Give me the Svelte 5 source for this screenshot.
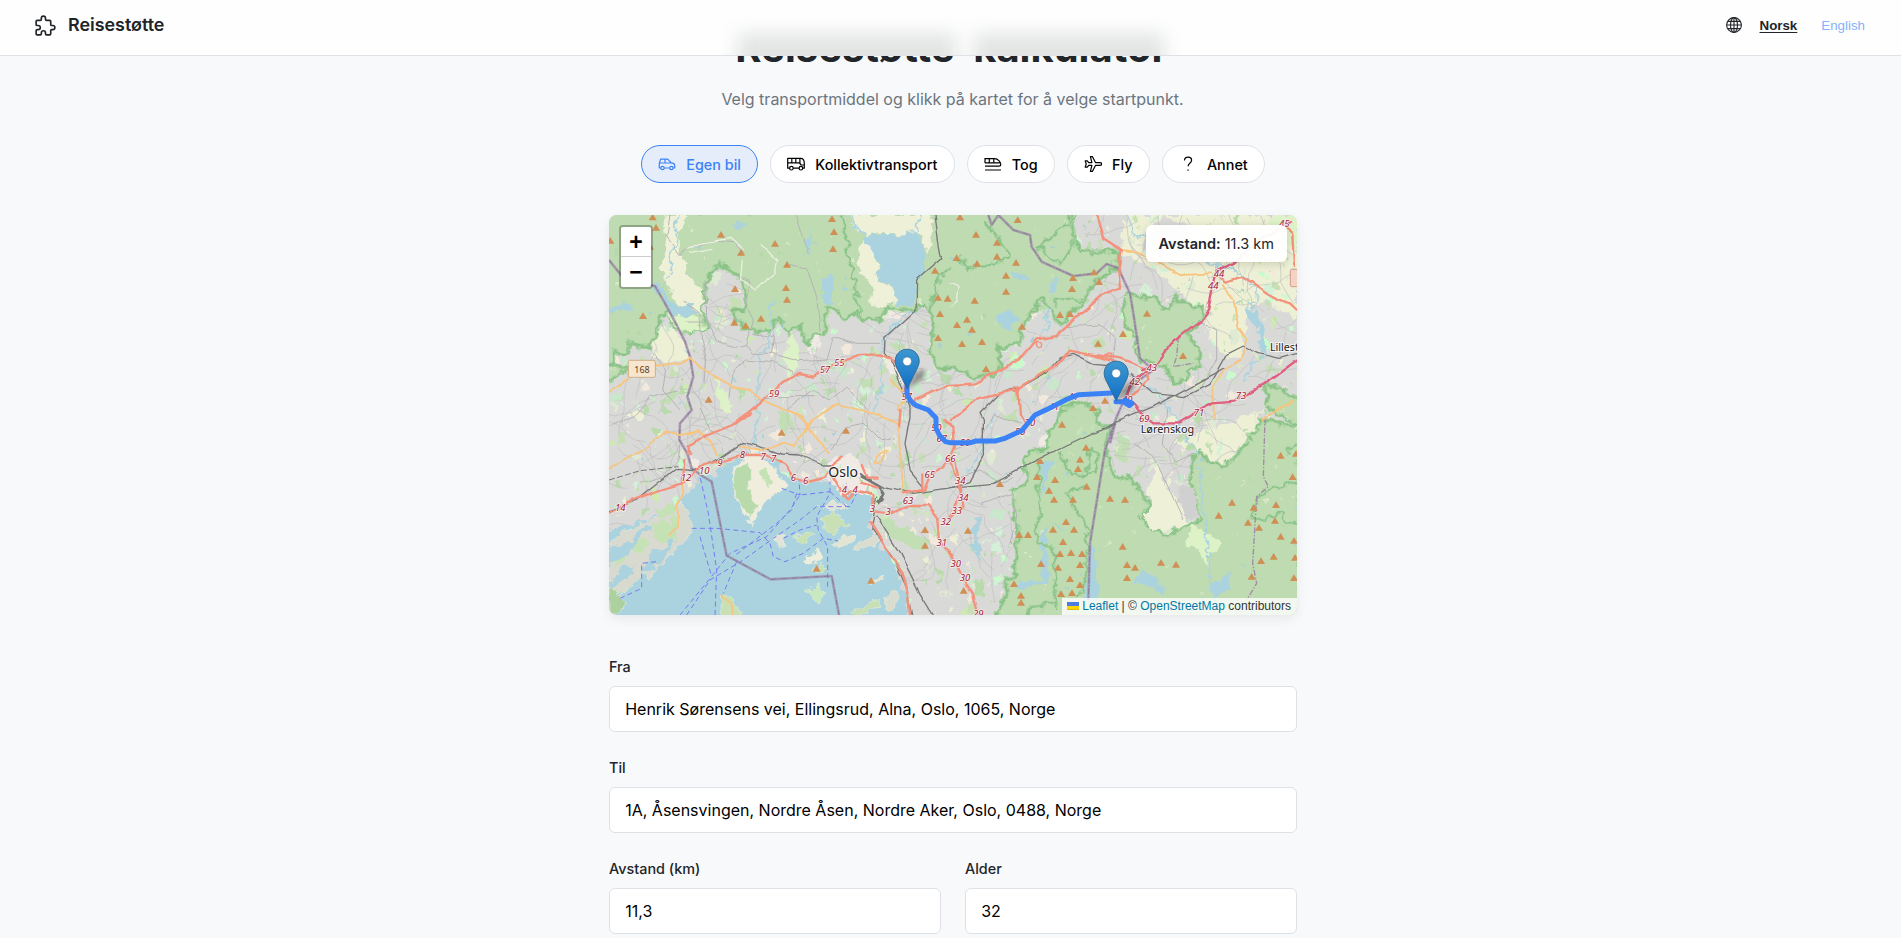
<script>
  const modes = [
    { id: 'car', label: 'Egen bil', active: true },
    { id: 'bus', label: 'Kollektivtransport' },
    { id: 'train', label: 'Tog' },
    { id: 'plane', label: 'Fly' },
    { id: 'other', label: 'Annet' }
  ];

  // Small deterministic generator for parks, blocks and residential streets.
  let seed = 4711;
  const rnd = () => ((seed = (seed * 16807) % 2147483647) / 2147483647);
  const f = (n) => n.toFixed(0);

  function blob(x, y, r) {
    let d = '';
    for (let i = 0; i < 8; i++) {
      const a = (i / 8) * Math.PI * 2;
      const q = r * (0.45 + rnd() * 0.8);
      d += (i ? 'L' : 'M') + f(x + Math.cos(a) * q) + ' ' + f(y + Math.sin(a) * q * 1.25);
    }
    return d + 'Z';
  }
  function street(x, y) {
    let a = rnd() * 6.28;
    let d = `M${f(x)} ${f(y)}`;
    for (let i = 0; i < 6; i++) {
      a += (rnd() - 0.5) * 1.1;
      x += Math.cos(a) * 26;
      y += Math.sin(a) * 26;
      d += `L${f(x)} ${f(y)}`;
    }
    return d;
  }
  const parkColors = ['#cdebb0', '#c9e8cb', '#c8facc', '#b9dbab', '#f2e9dc', '#eef0d5', '#d5f0d8', '#dfe9d3', '#c6dfb5'];
  const parks = Array.from({ length: 1300 }, () => {
    const x = 27 + rnd() * 2064, y = 15 + rnd() * 1200;
    return { d: blob(x, y, 3 + rnd() * rnd() * 20), c: parkColors[Math.floor(rnd() * parkColors.length)] };
  });
  const streets = Array.from({ length: 430 }, () => street(27 + rnd() * 2064, 15 + rnd() * 1200));
  const clearings = Array.from({ length: 420 }, () => {
    const x = 27 + rnd() * 2064, y = 15 + rnd() * 1200;
    return { d: blob(x, y, 2 + rnd() * 5), c: ['#cbe3bd', '#b5d8a8', '#c9e3bb', '#dbe8c9', '#a7d0d8'][Math.floor(rnd() * 5)] };
  });

  const forests = [
    'M0 0V510L27 510 60 490 80 470 35 465 40 430 82 432 90 390 130 415 155 400 175 360 180 318 205 305 225 350 260 365 322 355 305 290 318 215 340 185 355 157 380 182 410 195 435 235 446 285 432 300 400 300 405 340 430 345 440 360 510 365 530 320 565 368 605 345 608 385 622 405 640 380 670 370 676 295 700 297 740 328 765 310 790 328 845 325 860 297 945 298 975 285 990 300 1000 340 988 430 1022 480 1060 468 1080 482 1130 502 1185 490 1200 460 1198 408 1255 405 1270 340 1300 300 1325 268 1350 300 1365 325 1387 352 1405 310 1425 300 1450 272 1472 240 1488 215 1515 196 1550 168 1562 122 1440 126 1420 60 1400 0Z',
    'M1580 250 1670 265 1680 290 1705 300 1728 260 1750 280 1812 292 1812 325 1775 355 1760 370 1802 422 1795 470 1762 480 1755 510 1720 516 1700 480 1660 460 1620 450 1600 370 1575 345 1570 290Z',
    'M1350 660 1380 620 1400 590 1440 575 1490 595 1492 640 1525 650 1518 720 1525 755 1545 800 1590 805 1650 882 1625 922 1660 960 1700 975 1765 945 1800 930 1775 822 1775 750 1795 720 1830 762 1888 762 1930 705 1970 660 1980 628 2070 645 2100 650V1230H1190L1200 1180 1225 1145 1210 1110 1245 1100 1245 1040 1255 980 1240 850 1285 810 1270 750 1290 725 1340 715 1345 680Z',
    'M1995 520 2030 530 2100 570V650L2050 620 2000 590Z'
  ];
  const farms = [
    'M190 15 260 15 235 70 245 130 270 200 310 250 300 310 230 280 205 230 180 170 200 100Z',
    'M755 15H1000L985 130 955 65 905 80 850 70 790 82 770 60Z',
    'M800 82 820 145 838 165 832 205 880 240 892 285 850 290 810 285 820 240 780 180 775 120Z',
    'M170 370 215 350 255 395 262 440 190 462 150 430Z',
    'M1575 15H2091V330L2000 270 1940 300 1930 430 1880 450 1830 380 1812 300 1740 250 1650 170 1560 130Z',
    'M1675 765 1640 850 1660 885 1625 920 1665 965 1760 945 1755 890 1690 815Z',
    'M1770 600H1990L1975 650 1925 700 1885 755 1825 755 1790 720 1720 700 1830 660Z'
  ];
  const scrub = [
    'M215 340 320 350 300 360 245 365Z',
    'M1770 945 1825 970 1870 1000 1825 1040 1830 1080 1795 1020 1760 1000Z',
    'M200 310 250 320 300 320 305 345 230 345Z',
    'M345 500 385 560 400 620 365 600 350 560Z',
    'M575 360 600 440 570 520 550 470Z',
    'M2010 20 2091 15 2091 120 2040 90Z'
  ];
  const towns = [
    'M1740 822 1780 830 1798 925 1750 920 1738 870Z',
    'M1835 430 1900 470 2091 420V560L1990 525 1990 600 1850 650 1740 590Z',
    'M1690 20 1760 40 1770 120 1690 150 1620 110Z',
    'M1400 15H1500L1558 110 1440 122Z'
  ];
  const waters = [
    'M790 82 860 72 905 82 925 62 948 60 980 130 968 200 950 225 945 285 890 287 880 240 832 202 840 165 815 135Z',
    'M160 215 180 225 210 275 250 290 275 280 290 310 265 322 215 315 190 270 165 240Z',
    'M27 300 60 285 100 280 95 300 40 310Z',
    'M675 200 690 198 705 235 690 290 665 280Z',
    'M640 45 630 110 618 145 625 100Z',
    'M720 232 752 240 735 248Z',
    'M1185 310 1225 295 1245 320 1260 330 1225 358 1190 335Z',
    'M1240 190 1265 185 1285 210 1260 222 1245 210Z',
    'M1355 195 1370 200 1365 250 1352 245Z',
    'M1325 755 1355 750 1345 800 1325 860Z',
    'M1335 950 1345 1060 1345 1125 1250 1135 1260 1108 1325 1115 1325 1020 1315 1000Z',
    'M1470 990 1485 1030 1495 1165 1465 1180 1450 1165Z',
    'M1120 925 1140 920 1135 990 1145 1060 1115 1020Z',
    'M1930 290 1975 300 1985 340 2000 430 1978 435 1970 350 1940 320Z',
    'M1830 1120 1870 1110 1890 1080 1885 1140 1835 1160Z',
    'M1600 1120 1625 1075 1680 1120 1700 1160 1650 1130Z',
    'M395 40 430 45 440 52 405 55Z',
    'M0 975 100 940 160 920 240 885 240 860 280 845 300 790 340 805 380 762 440 725 490 740 520 750 550 790 590 815 640 820 690 812 715 840 735 862 775 842 812 860 815 905 805 945 850 1010 890 1080 920 1170 925 1230H0Z'
  ];
  const islands = [
    { c: '#d9dacf', d: 'M27 1000 80 960 150 930 250 885 272 930 262 985 215 1030 170 1075 145 1105 120 1090 100 1130 55 1150 27 1165Z' },
    { c: '#f1eddc', d: 'M400 770 450 728 500 750 530 785 556 830 510 865 470 910 458 945 425 905 400 850Z' },
    { c: '#b9dbab', d: 'M408 775 440 758 455 790 445 840 470 880 450 925 415 880 400 830Z' },
    { c: '#add19e', d: 'M27 1110 60 1150 80 1190 50 1215H27Z' },
    { c: '#c8e0b4', d: 'M670 930 700 905 735 930 745 950 700 970 672 960Z' },
    { c: '#c8e0b4', d: 'M580 985 630 960 640 975 605 1000Z' },
    { c: '#c8e8c0', d: 'M618 1150 655 1120 672 1140 665 1185 635 1170Z' },
    { c: '#eeeedd', d: 'M612 1050 660 1020 675 1035 640 1065Z' },
    { c: '#e2e4da', d: 'M520 985 550 970 560 1000 535 1015Z' },
    { c: '#d9dccf', d: 'M755 1015 800 985 845 960 835 1000 790 1020Z' },
    { c: '#e4e4d2', d: 'M700 1005 730 985 765 975 755 995 712 1015Z' },
    { c: '#c8e0b4', d: 'M365 1155 395 1165 425 1205 410 1230 365 1230 360 1190Z' },
    { c: '#d9dccf', d: 'M855 1155 895 1140 890 1190 860 1200Z' },
    { c: '#e4e4d2', d: 'M805 1120 840 1095 850 1105 815 1130Z' },
    { c: '#c8e0b4', d: 'M640 1080 670 1055 680 1070 655 1092Z' },
    { c: '#c6dfb5', d: 'M750 1205 840 1165 835 1190 770 1225Z' },
    { c: '#e2e4da', d: 'M655 890 700 870 740 890 700 905Z' }
  ];
  // Narrow bays and greenery cut into the western peninsula.
  const bays = ['M27 1020 80 1000 130 950 110 1010 60 1050 27 1060Z', 'M120 1090 160 1030 230 985 200 1030 160 1075Z', 'M27 1120 60 1080 110 1065 80 1100 40 1130Z', 'M90 980 140 945 150 955 105 990Z'];
  const coastGreens = ['M170 900 215 880 225 905 180 930Z', 'M150 950 190 930 225 950 235 990 200 1000 165 985Z', 'M100 1000 140 980 145 1010 105 1030Z', 'M45 1050 75 1035 70 1060 45 1075Z', 'M480 780 500 775 515 820 495 830Z', 'M210 920 240 915 235 955 215 950Z'];
  const centre = [
    'M670 790 700 745 740 735 780 750 810 790 830 850 800 850 770 840 735 870 710 830Z',
    'M620 420 650 380 665 380 655 410 640 440Z',
    'M850 300 930 300 880 325 855 325Z',
    'M860 440 910 440 915 520 870 500Z',
    'M1320 680 1345 675 1340 720 1315 700Z',
    'M405 318 430 310 455 325 500 318 490 335 445 345 412 340Z',
    'M270 740 300 750 305 780 275 770Z'
  ];
  const greens = [
    'M185 575 220 535 232 550 190 600Z', 'M530 610 555 600 585 640 560 670 535 645Z',
    'M860 405 900 398 920 410 890 420Z', 'M835 920 900 950 985 990 975 1020 910 1000 850 960Z',
    'M430 80 450 100 440 180 425 175Z', 'M780 510 820 500 810 530 785 530Z',
    'M1475 395 1500 375 1520 400 1495 420Z', 'M1210 610 1255 600 1250 640 1215 635Z',
    'M1380 560 1460 575 1440 600 1390 610Z', 'M940 40 960 60 950 75 935 55Z',
    'M1560 660 1590 700 1580 760 1545 740Z', 'M660 300 690 310 685 360 665 350Z'
  ];
  const rivers = [
    'M235 15 225 60 235 90 215 130 205 160 212 190 195 220 180 225', 'M515 270 510 330 510 400 480 430 478 500 470 560 475 610 462 680 470 705',
    'M945 305 900 320 880 350 855 385 840 430 850 500 840 550 820 600', 'M760 15 770 50 790 80', 'M960 15 955 60',
    'M1785 720 1800 800 1812 900 1825 1000 1830 1120', 'M1575 15 1600 70 1700 100 1800 150 1900 180 1975 230 1970 280 1930 290',
    'M1180 610 1175 680 1120 760 1110 790', 'M1335 290 1348 340 1330 380', 'M1650 530 1700 580 1740 650 1785 720', 'M2000 440 1960 460 1930 520'
  ];
  const minor = [
    'M318 215 320 330 345 390 400 410 440 400 460 430 515 430 520 380 460 370', 'M415 200 450 215 440 290 460 330 440 400', 'M250 270 300 310 305 400 320 450 315 520',
    'M210 15 200 80 240 140 270 110 340 90 400 95 430 130', 'M515 430 600 455 680 450 700 380 770 400 840 400', 'M160 430 200 480 190 540 240 600', 'M390 560 400 480 440 450 530 460 600 500',
    'M27 650 100 620 150 560 230 540', 'M560 600 640 540 690 570 740 530 800 600', 'M470 570 540 560 640 560', 'M690 720 740 650 790 640 840 690 880 680', 'M1060 720 1140 690 1180 610 1260 640',
    'M1700 600 1690 700 1730 760 1780 730', 'M1790 330 1850 360 1850 450 1800 530', 'M1400 350 1500 345 1540 380 1535 470 1600 500', 'M1140 880 1240 850 1250 920 1230 1000', 'M1600 700 1660 740 1690 800 1750 930',
    'M260 330 310 330', 'M560 160 620 170 650 260 660 360', 'M590 15 625 130', 'M120 820 190 800 230 750 240 700', 'M300 600 330 660 400 690', 'M1080 800 1140 780 1200 820 1240 800'
  ];
  const yellow = [
    'M27 552 60 530 110 480 210 465 245 460 270 440 320 485 355 505 400 530 450 540 475 565 530 590 610 625 650 690 685 735',
    'M27 778 90 735 140 715 200 665 245 672 300 660 340 700 350 740', 'M420 710 490 720 550 695 585 705 630 640 690 600 710 582 800 605 850 625 895 640 895 700 905 770 902 845',
    'M860 720 835 740 830 760 850 755 865 720', 'M560 600 630 645', 'M245 815 250 850 235 890 238 945 205 970', 'M365 1155 395 1180 398 1215',
    'M1565 120 1610 125 1670 155 1740 195 1835 190', 'M1870 220 1900 270 1915 350 1942 390 1925 450 1870 480 1840 530 1845 620', 'M1990 630 2080 570', 'M905 640 900 590 930 560 870 500'
  ];
  const orange = [
    'M415 630 480 575 550 515 600 492 640 500 700 465 780 435 840 433 885 455 915 500 920 560', 'M270 735 265 710 290 690 400 645 450 610',
    'M27 905 100 870 180 840 245 820 290 780 340 760 430 735 500 735 560 770 580 805 615 815 675 800 700 760 725 742',
    'M940 590 945 570 1050 525 1120 520 1190 490 1230 455 1255 450 1290 410 1310 385 1375 375 1430 320 1500 260 1560 235 1555 180 1565 120 1510 85 1488 15',
    'M1050 630 1130 565 1250 540 1370 465 1410 422 1450 430 1560 445 1600 460 1640 480 1645 510 1620 540 1595 560', 'M1255 540 1260 610 1275 635', 'M1030 630 1060 650 1065 710 1050 750 1080 850 1050 930',
    'M700 800 730 850 745 865 770 840', 'M730 855 760 840 820 855 825 905 870 910 920 885 980 885 1015 930 1020 985 1060 1040', 'M780 815 830 830', 'M785 765 800 800 830 800', 'M970 790 970 840 905 850',
    'M820 870 820 900', 'M1065 750 1090 890 1045 930', 'M1050 1030 1090 1100 1120 1150 1135 1215', 'M810 940 860 1020 905 1090 925 1160 930 1215', 'M905 600 900 650',
    'M1850 195 1880 215 1925 200 2000 250 2070 280 2091 300', 'M2055 50 2080 70 2085 170', 'M245 820 250 750', 'M1050 742 990 800 975 840', 'M1480 435 1540 455'
  ];
  const magenta = [
    'M1620 480 1675 455 1720 395 1800 335 1825 300 1845 190 1900 160 1980 90 2070 35', 'M1580 565 1600 510 1640 480', 'M1595 575 1620 610 1660 640 1735 640 1800 600 1840 580 1900 575 1990 525 2091 450'
  ];
  const rails = [
    'M27 900 110 870 230 775 300 780 360 745 430 697 480 710 540 732 600 735 670 765 700 765', 'M780 790 850 830 940 850 1040 835 1110 815 1150 740 1150 630 1140 610 1200 550 1270 530 1340 490 1385 440 1420 430 1480 460 1540 465',
    'M1050 832 1180 820 1290 760 1400 705 1540 640 1660 590 1870 475', 'M1590 490 1660 550 1750 560 1830 520 1880 430 1930 405 1975 430 2040 445 2091 430',
    'M1005 15 1015 90 1025 145 950 210 948 300 855 385 853 430 880 460 930 590 930 620 915 700 930 780 970 830', 'M830 860 815 960 870 1030 920 1140 935 1215', 'M830 920 900 1030 960 1150 1000 1215'
  ];
  const borders = [
    'M27 150 75 210 165 228 195 280 230 345 255 395 270 440 280 500 262 560 275 600 240 640 238 690 262 730 275 775 310 800 335 815 380 1037 512 1108 695 1098 720 1230',
    'M1165 15 1175 45 1195 15 1240 60 1290 75 1295 110 1325 155 1420 198 1490 190 1520 162 1555 175 1590 250 1600 310 1620 445 1660 480 1590 530 1550 620 1515 720 1470 1000 1465 1170',
    'M1545 640 1530 700'
  ];
  const greenEdges = [
    'M725 15 745 130 785 325', 'M1075 140 1105 180 1170 160 1185 160 1230 140 1200 90 1150 30', 'M1425 20 1330 100 1310 110 1380 160 1420 110 1420 30', 'M1120 160 1100 185',
    'M1365 290 1370 270 1450 270', 'M1320 755 1315 830 1325 920 1305 950 1310 1000 1360 1010 1370 1200', 'M1385 730 1400 780 1455 800 1470 720 1495 740 1490 780 1440 800', 'M1462 830 1400 845 1420 890 1460 950 1460 1100 1440 1160',
    'M2091 815 2000 840 1970 870 1955 920 1990 930 2045 910 2060 940 2091 940', 'M1280 1215 1290 1190 1370 1175', 'M990 300 1015 210 1050 170', 'M2091 700 2060 715 2065 730'
  ];
  const ferries = [
    'M275 955 350 955 480 968 510 1000 520 1040 555 1055 610 1030 670 985 715 993', 'M240 1215 310 1130 390 1030 500 980 570 900 600 855 690 845', 'M260 1215 330 1110 430 1050 520 985 600 930 650 890 750 890 770 850',
    'M345 1215 350 1080 325 910 300 800', 'M300 980 335 1100', 'M683 1130 683 1010 655 960 650 920 690 850 690 815', 'M545 835 585 850 600 855 597 810', 'M410 1055 370 1150', 'M60 1165 125 1135 125 1060 170 1055', 'M690 845 740 890', 'M550 985 600 960 650 945', 'M590 850 575 900 530 940 400 1040'
  ];
  const peaks = [
    [158,22],[168,53],[31,92],[150,110],[363,74],[423,128],[525,101],[561,164],[558,234],[561,269],[405,237],[129,318],[403,338],[437,347],[483,326],[326,569],[696,27],[702,66],[699,117],[1005,182],[1014,263],[1043,266],[1020,312],[1014,384],
    [1080,22],[1253,30],[1128,74],[1191,98],[1070,144],[1131,161],[1191,140],[1248,158],[1218,197],[1482,187],[1419,204],[1497,216],[1416,237],[1218,245],[1124,272],[1380,315],[1410,312],[1641,311],[1101,329],[1071,345],[1116,359],[1266,350],[1569,372],[1086,402],[1146,396],[1494,401],[1749,438],[1158,477],[1515,572],[1479,594],
    [545,668],[738,662],[975,960],[975,1007],[650,1076],[813,1112],
    [1386,644],[1458,713],[1440,749],[1320,753],[1434,777],[1311,801],[1365,810],[1347,842],[1362,869],[1419,869],[1460,830],[1200,822],[1530,866],[1575,869],[1398,936],[1359,959],[1422,959],[1257,975],[1284,975],[1389,996],[1104,962],[1380,1032],[1413,1029],[1446,1032],[1323,1062],[1374,1073],[1440,1065],[1410,1107],[1440,1125],[1383,1152],[1416,1149],[1242,1122],[1263,1157],[1263,1178],[1091,1142],[1568,1010],[1581,1065],[1605,1073],[1581,1104],[1683,1058],[1728,1064],[1856,917],[1896,878],[1961,893],[1944,938],[1977,953],[2028,885],[2025,932],[2042,737],[2088,731],[2078,801],[2042,980],[2082,992],[2021,1040],[1983,1053],[1955,1100],[2082,1104],[2085,1043]
  ];
  const refs = [
    ['59',522,560],['57',675,489],['55',718,468],['57',920,569],['45',2053,50],['44',1857,200],['44',1840,238],['43',1655,482],['42',1604,526],['73',1923,567],['71',1797,617],['69',1633,636],['41',1420,570],['41',1362,600],
    ['14',61,903],['12',258,814],['10',313,791],['9',360,769],['8',427,743],['7',489,749],['7',521,756],['6',580,813],['6',617,823],['4',733,850],['4',765,850],['3',817,906],['3',864,916],['63',924,882],['65',989,804],['66',1051,757],['32',1037,944],['31',1025,1008],
    ['34',1081,822],['34',1090,872],['33',1070,911],['30',1067,1070],['30',1095,1114],['29',1135,1222],['50',1009,662],['50',1095,709],['50',1260,674],['70',1290,648],['67',1025,697],['40',1582,580]
  ];
  const pins = [[884, 416], [1511, 452]];
</script>

<div class="page">
  <header class="topbar">
    <div class="shade"><i></i><i></i></div>
    <div class="brand">
      <svg class="puzzle" viewBox="0 0 24 24"><path d="M4 7h3a1 1 0 0 0 1-1v-1a2 2 0 0 1 4 0v1a1 1 0 0 0 1 1h3a1 1 0 0 1 1 1v3a1 1 0 0 0 1 1h1a2 2 0 0 1 0 4h-1a1 1 0 0 0-1 1v3a1 1 0 0 1-1 1h-3a1 1 0 0 1-1-1v-1a2 2 0 0 0-4 0v1a1 1 0 0 1-1 1h-3a1 1 0 0 1-1-1v-3a1 1 0 0 1 1-1h1a2 2 0 0 0 0-4h-1a1 1 0 0 1-1-1v-3a1 1 0 0 1 1-1" /></svg>
      <span>Reisestøtte</span>
    </div>
    <nav class="languages">
      <svg class="globe" viewBox="0 0 16 16"><circle cx="8" cy="8" r="7.4" /><ellipse cx="8" cy="8" rx="3.5" ry="7.4" /><path d="M8 .6v14.8M.6 8h14.8M1.7 4.4h12.6M1.7 11.6h12.6" /></svg>
      <button class="lang current">Norsk</button>
      <button class="lang">English</button>
    </nav>
  </header>

  <main>
    <h1>Reisestøtte-kalkulator</h1>
    <p class="intro">Velg transportmiddel og klikk på kartet for å velge startpunkt.</p>

    <div class="modes">
      {#each modes as mode}
        <button class="mode" class:active={mode.active}>
          <svg viewBox="0 0 18 18">
            {#if mode.id === 'car'}
              <path d="M2.7 13H1.3V8.5L2.6 4.1h7.1l3.6 3.8 2.8.8.6 1.6V13h-1.4M6.3 13h5.3M1.4 8h11.8M7 4.2V8" /><circle cx="4.5" cy="13" r="1.7" /><circle cx="13.4" cy="13" r="1.7" />
            {:else if mode.id === 'bus'}
              <path d="M2.6 13.2H.7V3.3h13.1c2.2 0 3.5 2.500 3.500 5.200v4.700h-1.600M6.200 13.200h5.900M.7 7.900h12.200M4.800 3.300v4.600M8.800 3.300v4.600M12.900 3.500v5l1.300 1.500h3" /><circle cx="4.4" cy="13.2" r="1.8" /><circle cx="13.9" cy="13.2" r="1.8" />
            {:else if mode.id === 'train'}
              <path d="M1 3.7h9.500c3.400 0 6.300 3.100 6.300 5.800 0 1-.8 1.700-1.800 1.700H1M1 7.900h14.800M5.300 3.700v4.200M9.800 3.700v4.200M1 3v5M1 15h16" />
            {:else if mode.id === 'plane'}
              <path d="M15.6 7.7h-4L8.5 1.7H6.4l1.5 6H4.7L3.3 5.9H1.2l1 3.1-1 3.1h2.1l1.4-1.8h3.2l-1.5 6h2.1l3.1-6h4c1.8 0 2.2-.6 2.2-1.3s-.5-1.3-2.2-1.3Z" />
            {:else}
              <path d="M5.5 5.4c0-2 1.5-3.2 3.6-3.2s3.5 1.3 3.5 3.1c0 3-3.5 2.9-3.5 5.9M9.1 14.4v1.3" />
            {/if}
          </svg>
          {mode.label}
        </button>
      {/each}
    </div>

    <section class="map">
      <svg class="tiles" viewBox="27 15 2064 1200">
        <defs>
          <linearGradient id="pin" x1="0" y1="0" x2="0" y2="1"><stop offset="0" stop-color="#3d98d0" /><stop offset="1" stop-color="#126fc6" /></linearGradient>
          <filter id="soft" x="-50%" y="-50%" width="200%" height="200%"><feGaussianBlur stdDeviation="6" /></filter>
          <filter id="coast" filterUnits="userSpaceOnUse" x="-60" y="-60" width="2240" height="1360" color-interpolation-filters="sRGB">
            <feTurbulence type="fractalNoise" baseFrequency=".035" numOctaves="3" seed="8" />
            <feDisplacementMap in="SourceGraphic" scale="34" xChannelSelector="R" yChannelSelector="G" />
          </filter>
          <filter id="bend" filterUnits="userSpaceOnUse" x="-60" y="-60" width="2240" height="1360" color-interpolation-filters="sRGB">
            <feTurbulence type="fractalNoise" baseFrequency=".014" numOctaves="2" seed="3" />
            <feDisplacementMap in="SourceGraphic" scale="20" xChannelSelector="R" yChannelSelector="G" />
          </filter>
        </defs>
        <rect x="27" y="15" width="2064" height="1200" fill="#d9d9d8" />
        <g filter="url(#coast)">
          <g fill="#eef0d5">{#each farms as d}<path {d} />{/each}</g>
          <g fill="#d9d9d8">{#each towns as d}<path {d} />{/each}</g>
          <g fill="#f1eae4">{#each centre as d}<path {d} />{/each}</g>
          <g>{#each parks as p}<path d={p.d} fill={p.c} />{/each}</g>
          <g fill="#c2deb4">{#each greens as d}<path {d} />{/each}</g>
        </g>
        <g fill="none" stroke="#c0c0c0" stroke-width="2" stroke-linejoin="round">{#each streets as d}<path {d} />{/each}</g>
        <g filter="url(#coast)">
          <g fill="#bedbb1" stroke="#a8d2a0" stroke-width="13" stroke-linejoin="round">{#each forests as d}<path {d} />{/each}</g>
          <g fill="none" stroke="#8bc288" stroke-width="6" stroke-linejoin="round">{#each forests as d}<path {d} />{/each}</g>
          <g>{#each clearings as p}<path d={p.d} fill={p.c} />{/each}</g>
          <g fill="#eef0d8">{#each farms.slice(0, 3) as d}<path {d} />{/each}<path d={farms[5]} /></g>
          <g fill="#def2c7">{#each scrub as d}<path {d} />{/each}</g>
          <path d={towns[0]} fill="#d0d0d0" />
          <g fill="#aad3df">{#each waters as d}<path {d} />{/each}</g>
          {#each islands as s}<path d={s.d} fill={s.c} stroke="#e6ebdc" stroke-width="2" />{/each}
          <g fill="#aad3df">{#each bays as d}<path {d} />{/each}</g>
          <g fill="#c4e2b4">{#each coastGreens as d}<path {d} />{/each}</g>
          <g fill="none" stroke="#aad3df" stroke-width="5" stroke-linejoin="round">{#each rivers as d}<path {d} />{/each}</g>
          <g fill="none" stroke="#a9d3a3" stroke-width="11" stroke-linejoin="round">{#each greenEdges as d}<path {d} />{/each}</g>
          <g fill="none" stroke="#8bc288" stroke-width="5" stroke-linejoin="round">{#each greenEdges as d}<path {d} />{/each}</g>
        </g>
        <g filter="url(#bend)">
          <g fill="none" stroke="#b4b4b4" stroke-width="3" stroke-linejoin="round">{#each minor as d}<path {d} />{/each}</g>
          <g fill="none" stroke="#ebefe0" stroke-width="4"><path d="M265 115 300 98 390 82 430 120M270 125 340 112M430 150 425 210 470 240 520 190 530 150 480 110M1050 220 1080 230 1075 270 1050 290" /></g>
        </g>
        <g fill="none" stroke="#777bf0" stroke-width="3" stroke-dasharray="15 10">{#each ferries as d}<path {d} />{/each}</g>
        <g fill="none" stroke="#9b86a6" stroke-width="8" stroke-opacity=".7" stroke-linejoin="round">{#each borders as d}<path {d} />{/each}</g>
        <g fill="none" stroke="#806a8b" stroke-width="2" stroke-dasharray="18 5 4 5">{#each borders as d}<path {d} />{/each}</g>
        <path d="M1995 620 1990 800 2005 830 1970 860 1958 1060 1970 1120 1940 1170M1735 380 1730 440 1720 470 1780 460" fill="none" stroke="#a18ba6" stroke-width="4" stroke-dasharray="18 5 4 5" />
        <path d="M27 810 120 782 235 770" fill="none" stroke="#777" stroke-width="3" stroke-dasharray="18 7" />
        <g filter="url(#bend)">
          <g fill="none" stroke="#787878" stroke-width="4" stroke-linejoin="round">{#each rails as d}<path {d} />{/each}</g>
          <path d="M780 795 835 825M835 825 850 850 835 880 850 865" fill="none" stroke="#777" stroke-width="9" />
          <g fill="none" stroke="#f7c580" stroke-width="5.500" stroke-linejoin="round">{#each yellow as d}<path {d} />{/each}</g>
          <g fill="none" stroke="#f3917b" stroke-width="7" stroke-linejoin="round" stroke-linecap="round">{#each orange as d}<path {d} />{/each}</g>
          <g fill="none" stroke="#e0607f" stroke-width="7" stroke-linejoin="round">{#each magenta as d}<path {d} />{/each}</g>
          <g fill="none" stroke="#f3917b" stroke-width="4"><circle cx="1314" cy="402" r="8" /><circle cx="1525" cy="440" r="8" /><circle cx="1251" cy="539" r="8" /><circle cx="266" cy="730" r="7" /></g>
        </g>
        <g fill="#d08f55">{#each peaks as [x, y]}<path d="M{x - 12} {y + 9}h24l-12-20Z" />{/each}</g>
        <g class="refs">{#each refs as [t, x, y]}<text {x} {y}>{t}</text>{/each}</g>
        <rect x="85" y="451" width="81" height="51" rx="4" fill="#f6e6cf" stroke="#cfae88" stroke-width="3" />
        <text class="shield" x="126" y="488">168</text>
        <rect x="2071" y="178" width="60" height="52" rx="4" fill="#f4d3c5" stroke="#d39c8c" stroke-width="3" />
        <g class="places">
          <text x="685" y="800" font-size="42">Oslo</text>
          <text x="1622" y="670" font-size="32.5">Lørenskog</text>
          <text x="2010" y="423" font-size="32">Lillestrøm</text>
        </g>
        <path d="M921 528V552Q928 574 948 586L985 600 1008 624V655L1018 675 1036 695 1050 698H1112L1128 693H1185L1212 686 1265 662 1305 615 1345 596 1398 569 1436 554 1535 549M1548 575H1570L1588 587 1596 580 1575 570" fill="none" stroke="#3b82f6" stroke-width="15" stroke-linecap="round" stroke-linejoin="round" />
        {#each pins as [x, y]}
          <path d="M{x + 37} {y + 118}Q{x + 58} {y + 70} {x + 82} {y + 62}Q{x + 100} {y + 68} {x + 88} {y + 86}Q{x + 70} {y + 106} {x + 37} {y + 118}Z" fill="#000" opacity=".32" filter="url(#soft)" />
          <g transform="translate({x} {y}) scale(3)">
            <path d="M12.5.5C5.8.5.5 5.8.5 12.5c0 3 1.2 5.7 2.4 8.2L12.5 40l9.6-19.3c1.2-2.500 2.400-5.200 2.400-8.200C24.500 5.800 19.200.5 12.500.5Z" fill="url(#pin)" stroke="#2e6c97" />
            <circle cx="12.5" cy="12.7" r="4.4" fill="#fff" stroke="#2e6c97" stroke-width=".6" />
          </g>
        {/each}
      </svg>
      <div class="zoom"><button aria-label="Zoom in">+</button><button aria-label="Zoom out">−</button></div>
      <div class="distance"><strong>Avstand:</strong> 11.3 km</div>
      <div class="credits"><svg viewBox="0 0 12 8"><path fill="#4c7be1" d="M0 0h12v4H0z" /><path fill="#ffd500" d="M0 4h12v3H0z" /><path fill="#e0bc00" d="M0 7h12v1H0z" /></svg> <a href="#leaflet">Leaflet</a> | © <a href="#osm">OpenStreetMap</a> contributors</div>
    </section>

    <form>
      <label class="wide">Fra<input value="Henrik Sørensens vei, Ellingsrud, Alna, Oslo, 1065, Norge" /></label>
      <label class="wide">Til<input value="1A, Åsensvingen, Nordre Åsen, Nordre Aker, Oslo, 0488, Norge" /></label>
      <label>Avstand (km)<input value="11,3" /></label>
      <label>Alder<input value="32" /></label>
    </form>
  </main>
</div>

<style>
  :global(body) { background: #f8f9fa; overflow: hidden; }
  .page { height: 938px; overflow: hidden; background: #f8f9fb; color: #212529; font: 16px/24px Inter, sans-serif; }
  * { box-sizing: border-box; }
  button { cursor: pointer; }
  .topbar { position: fixed; inset: 0 0 auto; z-index: 10; height: 56px; display: flex; align-items: center; justify-content: space-between; padding: 0 36px 5px 33px; background: #fefefe; border-bottom: 1px solid #dee2e6; }
  .shade { position: absolute; inset: 0; display: flex; justify-content: center; gap: 18px; overflow: hidden; padding-top: 33px; }
  .shade i { width: 218px; height: 60px; background: #e3e5e5; filter: blur(9px); }
  .shade i + i { width: 190px; }
  .brand { position: relative; display: flex; align-items: center; gap: 10px; font-size: 17.9px; font-weight: 600; }
  .puzzle { width: 25px; height: 25px; fill: none; stroke: currentColor; stroke-width: 1.6; stroke-linecap: round; stroke-linejoin: round; }
  .languages { position: relative; display: flex; align-items: center; }
  .globe { width: 16px; height: 16px; margin-right: 18px; fill: none; stroke: #212529; stroke-width: 1.1; }
  .lang { border: 0; padding: 0; background: none; font: 13.33px "Liberation Sans", Arial, sans-serif; color: #86b1fb; }
  .lang.current { margin-right: 24px; font-weight: 700; color: #212529; text-decoration: underline; text-underline-offset: 2px; }
  main { width: 688px; margin: 0 auto; padding-top: 24px; position: relative; left: 2.5px; }
  h1 { margin: 0 0 0 -3px; height: 52px; text-align: center; font-size: 40px; line-height: 47px; font-weight: 700; white-space: nowrap; }
  .intro { margin: 11px 0 34px -1px; text-align: center; color: #6c757d; }
  .modes { display: flex; justify-content: center; gap: 12px; }
  .mode { height: 38px; display: flex; align-items: center; gap: 10px; padding: 0 16.2px; border: 1px solid #dee2e6; border-radius: 19px; background: #fff; color: #000; font: 500 14.4px Inter, sans-serif; white-space: nowrap; }
  .mode svg { width: 18px; height: 18px; fill: none; stroke: currentColor; stroke-width: 1.2; stroke-linejoin: round; }
  .mode.active { color: #3b82f6; border-color: #3b82f6; background: #e5ecfa; }
  .map { position: relative; height: 400px; margin-top: 32px; border-radius: 8px; overflow: hidden; box-shadow: 0 4px 12px rgba(0, 0, 0, .07); }
  .tiles { display: block; width: 688px; height: 400px; }
  .refs { font: italic 28.5px "Noto Sans", sans-serif; fill: #a01830; stroke: #f5eeee; stroke-width: 5; paint-order: stroke; text-anchor: middle; }
  .shield { font: 27px "Noto Sans", sans-serif; fill: #633c17; text-anchor: middle; }
  .places { font-family: "Noto Sans", sans-serif; fill: #222; stroke: rgba(255, 255, 255, .75); stroke-width: 6; paint-order: stroke; }
  .zoom { position: absolute; left: 10px; top: 10px; display: flex; flex-direction: column; border: 2px solid rgba(0, 0, 0, .25); border-radius: 4px; background-clip: padding-box; }
  .zoom button { width: 30px; height: 30px; border: 0; padding: 0; background: #fff; color: #000; font: bold 23px/30px "Liberation Sans", Arial, sans-serif; }
  .zoom button:first-child { height: 30px; border-bottom: 1px solid #ccc; border-radius: 2px 2px 0 0; }
  .zoom button:last-child { border-radius: 0 0 2px 2px; }
  .distance { position: absolute; right: 10px; top: 10px; padding: 7px 13px 7px 12.5px; border-radius: 6px; background: rgba(255, 255, 255, .95); box-shadow: 0 2px 8px rgba(0, 0, 0, .15); font-size: 14.5px; line-height: 23px; }
  .distance strong { font-weight: 600; }
  .credits { position: absolute; right: 0; bottom: 0; padding: 0 6px 0 5px; background: rgba(255, 255, 255, .8); color: #333; font: 12px/16.8px "Liberation Sans", Arial, sans-serif; white-space: nowrap; }
  .credits svg { width: 12px; height: 8px; }
  .credits a { color: #0078a8; text-decoration: none; }
  form { display: grid; grid-template-columns: 1fr 1fr; gap: 24px; margin-top: 40px; }
  label { display: flex; flex-direction: column; gap: 8px; font-size: 14.4px; line-height: 23px; font-weight: 500; }
  .wide { grid-column: 1 / -1; }
  input { width: 100%; height: 46px; padding: 0 15.2px; border: 1px solid #dee2e6; border-radius: 6px; background: #fff; color: #000; font: 16px Inter, sans-serif; }
</style>
